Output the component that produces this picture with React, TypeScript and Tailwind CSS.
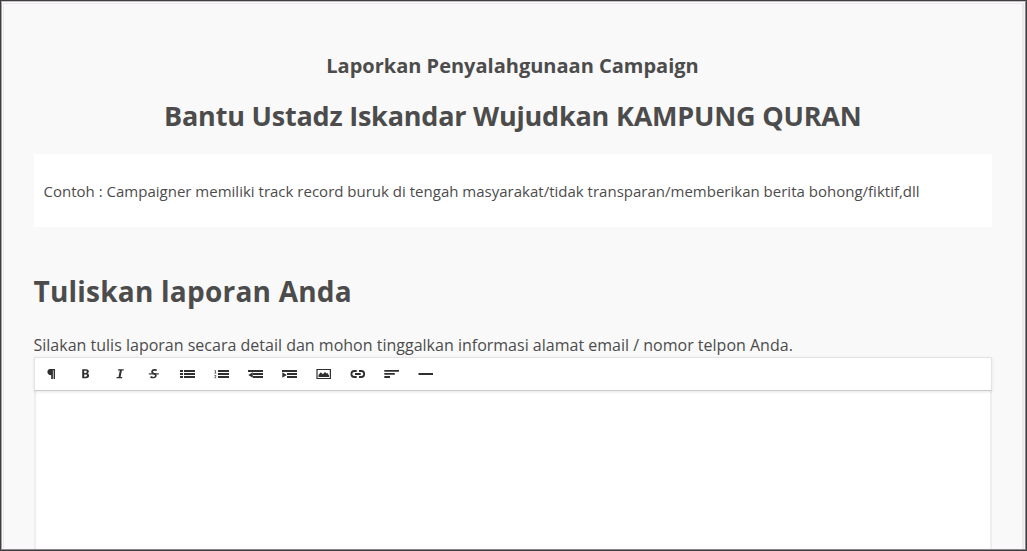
import type { ReactNode } from 'react';

interface Tool {
  label: string;
  icon: ReactNode;
}

// Glyphs share a 16x14 box, one unit per pixel
const tools: Tool[] = [
  {
    label: 'Format',
    icon: <path d="M6.200 2H11v10H9.600V3.200H8.900V12H7.200V8.200C4.800 8.200 3.400 7 3.400 5.100S4.500 2 6.200 2z" />,
  },
  {
    label: 'Bold',
    icon: <path fillRule="evenodd" d="M4.200 2.200h3.900c1.700 0 2.700.8 2.700 2.300 0 .9-.5 1.600-1.300 1.900 1 .3 1.600 1 1.600 2.200 0 1.800-1.200 2.700-3.100 2.700H4.200zm2 1.500v2.200h1.400c.8 0 1.200-.4 1.200-1.100s-.4-1.100-1.200-1.100zm0 3.700v2.400h1.500c.9 0 1.300-.4 1.300-1.200s-.4-1.200-1.300-1.200z" />,
  },
  {
    label: 'Italic',
    icon: <path d="M6.200 2.200h5.600l-.2 1.400H9.900L8.600 9.900h1.700l-.3 1.400H4.500l.2-1.400h1.800L7.800 3.600H5.900z" />,
  },
  {
    label: 'Deleted',
    icon: (
      <>
        <path d="M10.800 3.400C9.500 2.600 6.700 2.500 6.100 4.200c-.5 1.800 1.200 2.200 2.400 2.700 1.300.5 1.700 1.500 1 2.600-1 1.400-3.600 1.200-5 .3" fill="none" stroke="currentColor" strokeWidth="1.700" />
        <path d="M2.800 6.300h10v1.200h-10z" />
      </>
    ),
  },
  {
    label: 'Unordered List',
    icon: <path d="M0 3h3v2H0zM0 6h3v2H0zM0 9h3v2H0zM4 3h11v2H4zM4 6h11v2H4zM4 9h11v2H4z" />,
  },
  {
    label: 'Ordered List',
    icon: (
      <>
        <path d="M4 3h11v2H4zM4 6h11v2H4zM4 9h11v2H4z" />
        <path d="M.5 3.500h1V6M.3 6.100h2M.4 8.500h1.500v1L.6 10.700h1.600" fill="none" stroke="currentColor" strokeWidth=".7" />
      </>
    ),
  },
  {
    label: 'Outdent',
    icon: <path d="M0 3h15v2H0zM5 6h10v2H5zM5 9h10v2H5zM4.800 5.200v5.600L.3 8z" />,
  },
  {
    label: 'Indent',
    icon: <path d="M0 3h15v2H0zM5 6h10v2H5zM5 9h10v2H5zM.3 5.200v5.600L4.800 8z" />,
  },
  {
    label: 'Image',
    icon: <path fillRule="evenodd" d="M.4 2H15v10H.4zm1.200 1v8h12.200V3zM2.500 10V8l2.300-2.700 2 2L9 5l1.500 1.500L11.500 6 13 8.500V10z" />,
  },
  {
    label: 'Link',
    icon: (
      <path d="M6.700 4H4.400a3 3 0 0 0 0 6h2.300M9 4h2.200a3 3 0 0 1 0 6H9M5 7h5.700" fill="none" stroke="currentColor" strokeWidth="1.800" />
    ),
  },
  {
    label: 'Alignment',
    icon: <path d="M.3 3H15v1.800H.3zM.3 6h10.500v1.800H.3zM.3 9H6v2H.3z" />,
  },
  {
    label: 'Horizontal Rule',
    icon: <path d="M.5 6H15v2H.5z" />,
  },
];

function Toolbar() {
  return (
    <div className="relative flex h-[34px] shrink-0 border border-[#e3e3e3] border-b-[#c9c9c9] bg-white shadow-[0_1px_3px_rgba(0,0,0,0.1)]">
      {tools.map((tool) => (
        <button
          key={tool.label}
          type="button"
          aria-label={tool.label}
          className="flex h-[32px] w-[34px] items-center justify-center text-[#303030]"
        >
          <svg width="16" height="14" viewBox="0 0 16 14" fill="currentColor">
            {tool.icon}
          </svg>
        </button>
      ))}
    </div>
  );
}

export default function App() {
  return (
    <div className="h-[551px] overflow-hidden border border-[#3f3d3f] bg-[#f9f9f9] font-['Open_Sans',sans-serif] text-[#4c4c4c]">
      <div className="h-full border border-t-[#c4c1c4] border-r-[#898789] border-b-[#898789] border-l-[#a3a1a3]">
        <div className="h-full border-x border-t border-[#fcfbfc] border-r-[#f4f4f4]">
          <div className="flex h-full flex-col border-t border-l border-r-2 border-t-[#ece8ec] border-r-[#e9e9e9] border-l-[#ece8ec] pt-[48px] pr-[30px] pl-[30px]">
            <h4 className="-ml-px text-center text-[20px] leading-[28px] font-bold">Laporkan Penyalahgunaan Campaign</h4>
            <h2 className="mt-[16px] -ml-[0.5px] text-center text-[27px] leading-[40px] font-bold tracking-[-0.21px]">
              Bantu Ustadz Iskandar Wujudkan KAMPUNG QURAN
            </h2>
            <div className="mt-[18px] h-[73px] shrink-0 bg-white pt-[26px] pl-[9.5px] text-[15px] leading-[22px] tracking-[0.006px] whitespace-nowrap">
              Contoh : Campaigner memiliki track record buruk di tengah masyarakat/tidak transparan/memberikan berita bohong/fiktif,dll
            </div>
            <h2 className="mt-[44px] -ml-[0.5px] text-[28px] leading-[40px] font-bold tracking-[0.22px]">Tuliskan laporan Anda</h2>
            <p className="mt-[22px] -ml-[0.5px] text-[16px] leading-[24px] tracking-[0.005px]">
              Silakan tulis laporan secara detail dan mohon tinggalkan informasi alamat email / nomor telpon Anda.
            </p>
            <Toolbar />
            <div className="flex-1 border-x-2 border-[#eeeeee] bg-white" />
          </div>
        </div>
      </div>
    </div>
  );
}
